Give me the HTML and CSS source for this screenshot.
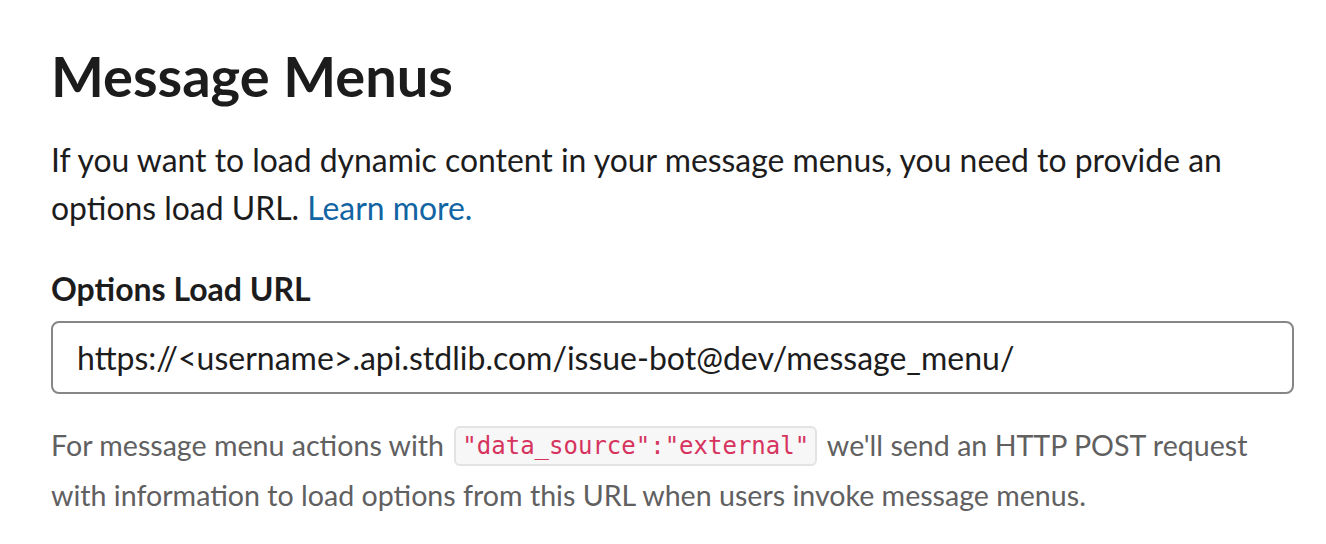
FILE: index.html
```html
<!DOCTYPE html>
<html>
<head>
<meta charset="utf-8">
<link rel="stylesheet" href="styles.css">
</head>
<body>
<main class="section">
  <h1 class="title">Message Menus</h1>
  <p class="intro">If you want to load dynamic content in your message menus, you need to provide an options load URL. <a class="link" href="#">Learn more.</a></p>
  <label class="label">Options Load URL</label>
  <div class="input">https://&lt;username&gt;.api.stdlib.com/issue-bot@dev/message_menu/</div>
  <p class="help">For message menu actions with <code class="code">"data_source":"external"</code> we'll send an HTTP POST request with information to load options from this URL when users invoke message menus.</p>
</main>
</body>
</html>
```
FILE: styles.css
```css
html, body { margin: 0; padding: 0; background: #fff; }
body { font-family: Lato, "Noto Sans", sans-serif; color: #1d1c1d; }
.section { padding: 42px 32px 0 51px; width: 1243px; }
.title { font-size: 56px; font-weight: 700; margin: 0 0 26px; line-height: 68px; }
.intro { font-size: 31.9px; line-height: 48px; margin: 0 0 37px; width: 1210px; }
.link { color: #1264a3; text-decoration: none; }
.label { display: block; font-size: 32px; font-weight: 700; line-height: 40px; margin-bottom: 12px; }
.input { border: 2px solid #868686; border-radius: 8px; box-sizing: border-box; height: 73px; padding: 0 24px; display: flex; align-items: center; font-size: 32px; width: 1243px; }
.help { font-size: 28.6px; line-height: 49px; color: #616061; margin: 27px 0 0; width: 1210px; }
.code { font-family: "DejaVu Sans Mono", monospace; font-size: 24px; color: #d6335e; background: #f7f7f7; border: 2px solid #e3e3e3; border-radius: 6px; padding: 4px 6px; margin: 0 3px; vertical-align: 2px; }
```
